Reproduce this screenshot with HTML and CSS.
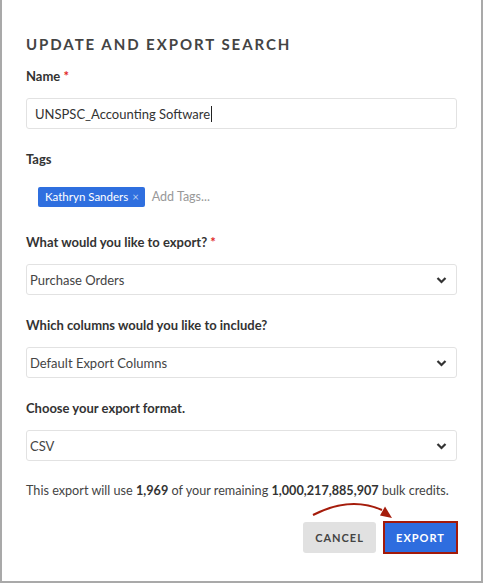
FILE: index.html
```html
<!DOCTYPE html>
<html lang="en">
<head>
  <meta charset="UTF-8" />
  <meta name="viewport" content="width=device-width, initial-scale=1.0" />
  <title>Update and Export Search</title>
  <link rel="stylesheet" href="styles.css">
</head>
<body>
  <div class="modal">
    <h2 class="title">Update and Export Search</h2>

    <div class="field">
      <label for="name">Name <span class="req">*</span></label>
      <div class="text-input">UNSPSC_Accounting Software<span class="caret"></span></div>
    </div>

    <div class="field">
      <label>Tags</label>
      <div class="tags">
        <span class="chip">Kathryn Sanders <span class="chip-x">&times;</span></span>
        <span class="tag-placeholder">Add Tags...</span>
      </div>
    </div>

    <div class="field">
      <label>What would you like to export? <span class="req">*</span></label>
      <div class="select">
        <span>Purchase Orders</span>
        <svg class="chev" width="11" height="8" viewBox="0 0 11 8"><path d="M1.5 2 L5.5 6 L9.5 2" fill="none" stroke="#333" stroke-width="2.2"/></svg>
      </div>
    </div>

    <div class="field">
      <label>Which columns would you like to include?</label>
      <div class="select">
        <span>Default Export Columns</span>
        <svg class="chev" width="11" height="8" viewBox="0 0 11 8"><path d="M1.5 2 L5.5 6 L9.5 2" fill="none" stroke="#333" stroke-width="2.2"/></svg>
      </div>
    </div>

    <div class="field">
      <label>Choose your export format.</label>
      <div class="select">
        <span>CSV</span>
        <svg class="chev" width="11" height="8" viewBox="0 0 11 8"><path d="M1.5 2 L5.5 6 L9.5 2" fill="none" stroke="#333" stroke-width="2.2"/></svg>
      </div>
    </div>

    <p class="credits">This export will use <b>1,969</b> of your remaining <b>1,000,217,885,907</b> bulk credits.</p>

    <div class="actions">
      <svg class="arrow" width="483" height="583" viewBox="0 0 483 583">
        <path d="M313 515 Q350 496 382 510" fill="none" stroke="#a51c0b" stroke-width="2"/>
        <polygon points="392,518 380,515.5 385,506.5" fill="#a51c0b"/>
      </svg>
      <button class="btn cancel">Cancel</button>
      <button class="btn export">Export</button>
    </div>
  </div>
</body>
</html>
```
FILE: styles.css
```css
html, body {
  margin: 0;
  height: 100%;
}
body {
  background: #a9a9a9;
  font-family: Lato, "Open Sans", sans-serif;
  color: #333;
  overflow: hidden;
}
.modal {
  margin-left: 2px;
  width: 479px;
  height: 581px;
  background: #fff;
  box-sizing: border-box;
  padding: 35px 24px 0;
}
.title {
  margin: 0 0 15px;
  font-size: 15px;
  line-height: 18px;
  font-weight: 700;
  letter-spacing: 1.95px;
  text-transform: uppercase;
  color: #444;
}
.field {
  margin-bottom: 22px;
}
label {
  display: block;
  font-size: 13px;
  line-height: 16px;
  font-weight: 700;
  color: #333;
  margin-bottom: 14px;
}
.req {
  color: #e0261f;
}
.text-input, .select {
  height: 31px;
  box-sizing: border-box;
  border: 1px solid #e2e2e2;
  border-radius: 3px;
  display: flex;
  align-items: center;
  font-size: 13px;
  color: #333;
}
.text-input {
  padding-left: 8px;
}
.caret {
  display: inline-block;
  width: 1px;
  height: 16px;
  background: #222;
  margin-left: 1px;
}
.select {
  justify-content: space-between;
  padding: 0 9px 0 3px;
  color: #444;
}
.tags {
  height: 31px;
  display: flex;
  align-items: center;
  padding-left: 12px;
  gap: 7px;
}
.chip {
  background: #2f6fdf;
  color: #fff;
  font-size: 11.5px;
  height: 20px;
  line-height: 20px;
  padding: 0 6px 0 7px;
  border-radius: 2px;
}
.chip-x {
  color: #b7cdf3;
  margin-left: 1px;
}
.tag-placeholder {
  font-size: 12.5px;
  color: #999;
}
.credits {
  margin: 0;
  font-size: 12.65px;
  line-height: 16px;
  color: #444;
  white-space: nowrap;
}
.credits b {
  color: #333;
}
.actions {
  margin-top: 22px;
  display: flex;
  justify-content: flex-end;
  gap: 7px;
}
.arrow {
  position: absolute;
  left: 0;
  top: 0;
  pointer-events: none;
}
.btn {
  font-family: Lato, "Open Sans", sans-serif;
  font-weight: 700;
  font-size: 11px;
  letter-spacing: 1px;
  text-transform: uppercase;
  border-radius: 3px;
  cursor: pointer;
}
.cancel {
  background: #e1e1e1;
  color: #444;
  border: none;
  width: 73px;
  height: 31px;
  margin-top: 1px;
}
.export {
  background: #2e6ddf;
  color: #fff;
  border: 2px solid #a31a0a;
  border-radius: 0;
  width: 75px;
  height: 33px;
  margin-right: -1px;
}
```
